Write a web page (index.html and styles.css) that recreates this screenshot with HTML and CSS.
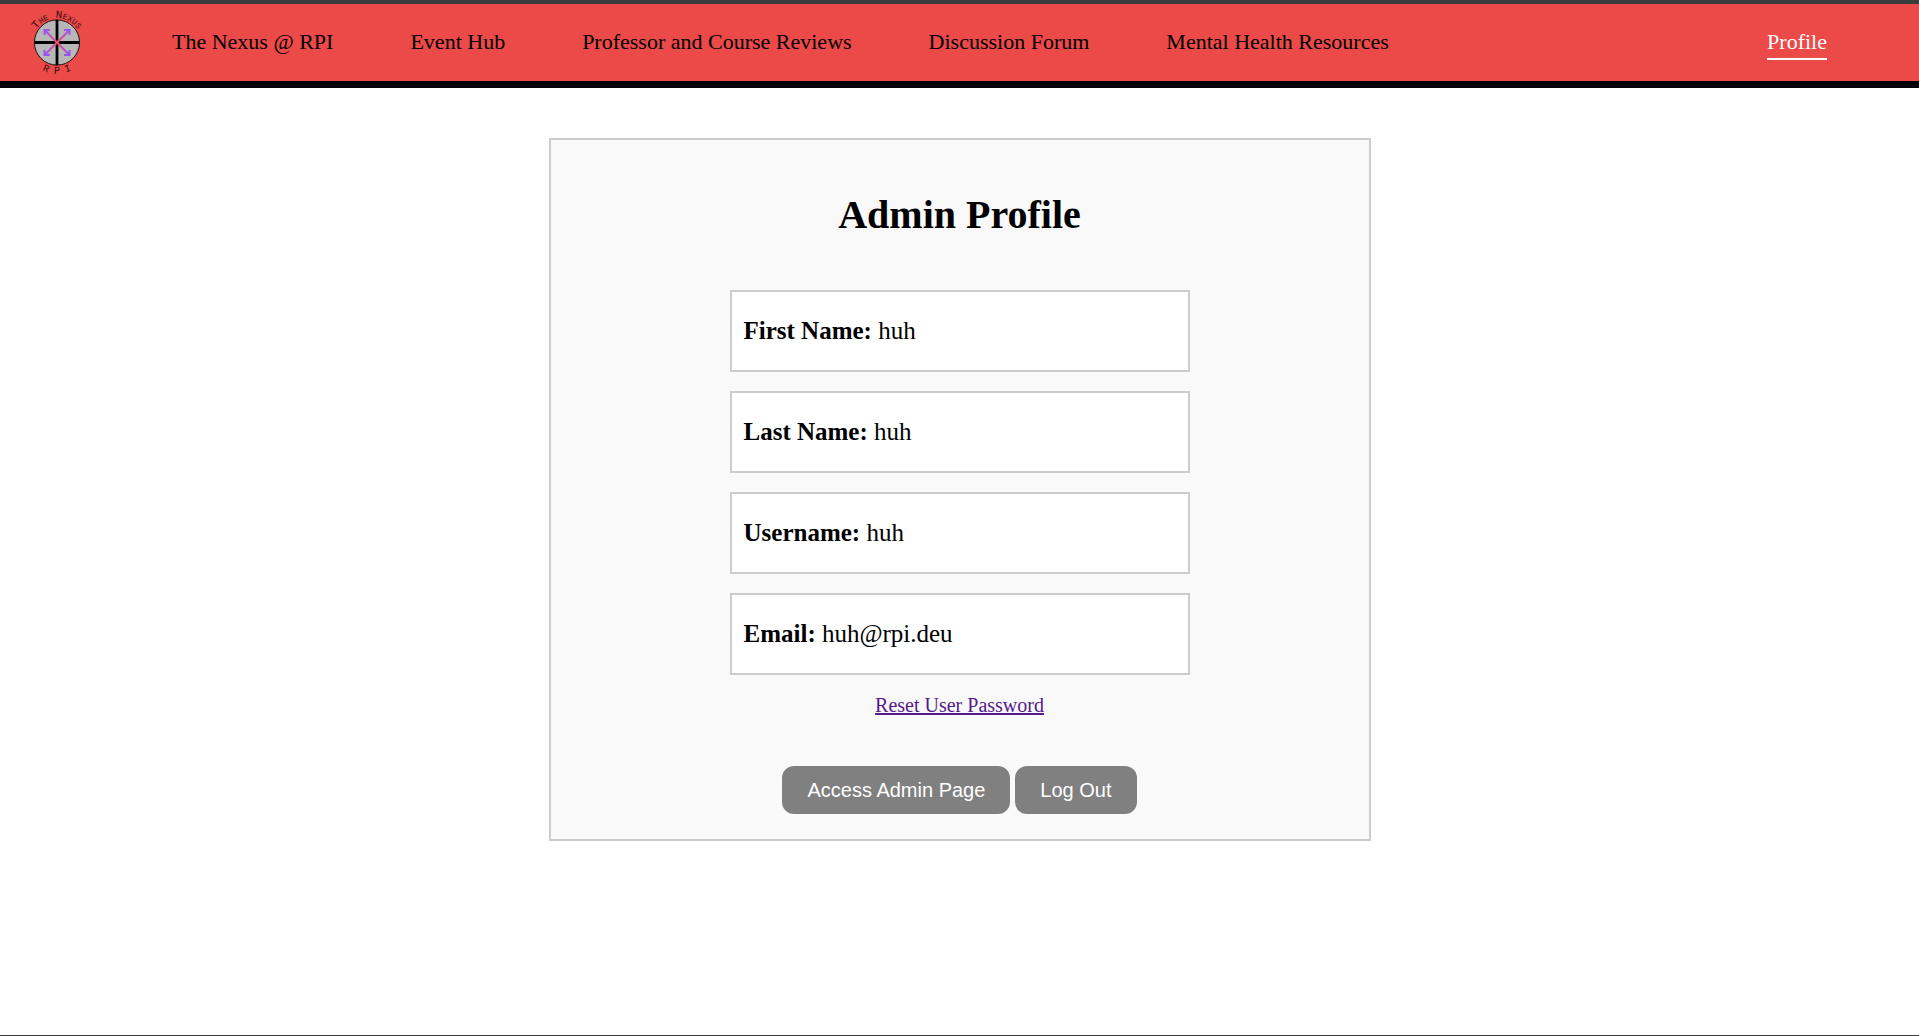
FILE: index.html
```html
<!DOCTYPE html>
<html lang="en">
<head>
<meta charset="utf-8">
<title>Profile - The Nexus @ RPI</title>
<link rel="stylesheet" href="styles.css">
</head>
<body>
<header class="site-header">
  <a class="logo" href="#" aria-label="The Nexus RPI">
    <svg class="logo-image" viewBox="0 1 60 72" width="60" height="72">
      <defs>
        <path id="arc-top" d="M5.500 36.500 A24.500 24.500 0 0 1 54.500 36.500"/>
        <path id="arc-bottom" d="M12 62 A31.500 31.500 0 0 0 48 62"/>
        <linearGradient id="arrow-a" gradientUnits="userSpaceOnUse" x1="17" y1="23" x2="43" y2="49">
          <stop offset="0" stop-color="#8f55ff"/><stop offset=".5" stop-color="#f0506a"/><stop offset="1" stop-color="#8f55ff"/>
        </linearGradient>
        <linearGradient id="arrow-b" gradientUnits="userSpaceOnUse" x1="17" y1="49" x2="43" y2="23">
          <stop offset="0" stop-color="#8f55ff"/><stop offset=".5" stop-color="#f0506a"/><stop offset="1" stop-color="#8f55ff"/>
        </linearGradient>
      </defs>
      <circle cx="30" cy="36.500" r="22.600" fill="#b7b7b7" stroke="#1c1010"/>
      <path d="M30 14v45M7.500 36.500h45" stroke="#000" stroke-width="2.800"/>
      <path d="M17.500 24l25 25M17.500 29v-5h5.500M42.500 44v5h-5.500" fill="none" stroke="url(#arrow-a)" stroke-width="2"/>
      <path d="M17.500 49l25-25M17.500 44v5h5.500M42.500 29v-5h-5.500" fill="none" stroke="url(#arrow-b)" stroke-width="2"/>
      <text class="logo-text logo-name"><textPath href="#arc-top" startOffset="50%" text-anchor="middle">The Nexus</textPath></text>
      <text class="logo-text"><textPath href="#arc-bottom" startOffset="50%" text-anchor="middle">R P I</textPath></text>
    </svg>
  </a>
  <nav class="main-nav">
    <a href="#">The Nexus @ RPI</a>
    <a href="#">Event Hub</a>
    <a href="#">Professor and Course Reviews</a>
    <a href="#">Discussion Forum</a>
    <a href="#">Mental Health Resources</a>
    <a class="active" href="#">Profile</a>
  </nav>
</header>
<main class="profile">
  <h1>Admin Profile</h1>
  <div class="fields">
    <p class="field"><strong>First Name:</strong> huh</p>
    <p class="field"><strong>Last Name:</strong> huh</p>
    <p class="field"><strong>Username:</strong> huh</p>
    <p class="field"><strong>Email:</strong> huh@rpi.deu</p>
  </div>
  <a class="reset" href="#">Reset User Password</a>
  <div class="actions">
    <button type="button">Access Admin Page</button>
    <button type="button">Log Out</button>
  </div>
</main>
</body>
</html>
```
FILE: styles.css
```css
* {
  box-sizing: border-box;
}

body {
  display: flex;
  flex-direction: column;
  min-height: 100vh;
  margin: 0;
  border-top: 4px solid #3c3c3c;
  border-bottom: 1px solid #3c3c3c;
  background: #fff;
  color: #000;
  font-family: "Liberation Serif", "Times New Roman", serif;
}

.site-header {
  display: flex;
  align-items: center;
  height: 84px;
  padding: 0 92px 0 27px;
  border-bottom: 7px solid #000;
  background: #ec4949;
}

.logo {
  display: flex;
  margin-right: 85px;
}

.logo-text {
  font: 10px "Liberation Mono", monospace;
  fill: #3a0f0f;
}

.logo-name {
  font-size: 11px;
  font-variant: small-caps;
}

.main-nav {
  display: flex;
  flex: 1;
  align-items: center;
  gap: 77px;
}

.main-nav a {
  border-bottom: 2px solid transparent;
  padding: 4px 0;
  color: #000;
  font-size: 22px;
  line-height: 24px;
  text-decoration: none;
}

.main-nav .active {
  margin-left: auto;
  border-color: #fff;
  color: #fff;
}

.profile {
  display: flex;
  flex-direction: column;
  align-items: center;
  width: 822px;
  max-width: 100%;
  margin: 50px auto;
  padding: 52px 25px 25px;
  border: 2px solid #ccc;
  background: #f9f9f9;
}

h1 {
  margin: 0 0 52px;
  font-size: 40px;
  line-height: 46px;
}

.fields {
  display: flex;
  flex-direction: column;
  gap: 19px;
  width: 460px;
  max-width: 100%;
}

.field {
  margin: 0;
  padding: 25px 12px;
  border: 2px solid #ccc;
  background: #fff;
  font-size: 25px;
  line-height: 28px;
}

.reset {
  margin: 19px 0 50px;
  color: #551a8b;
  font-size: 20px;
  line-height: 22px;
}

.actions {
  display: flex;
  gap: 5px;
}

button {
  padding: 12px 25px;
  border: 0;
  border-radius: 12px;
  background: #808080;
  color: #fff;
  font-family: "Liberation Sans", Arial, sans-serif;
  font-size: 20px;
  line-height: 24px;
}
```
